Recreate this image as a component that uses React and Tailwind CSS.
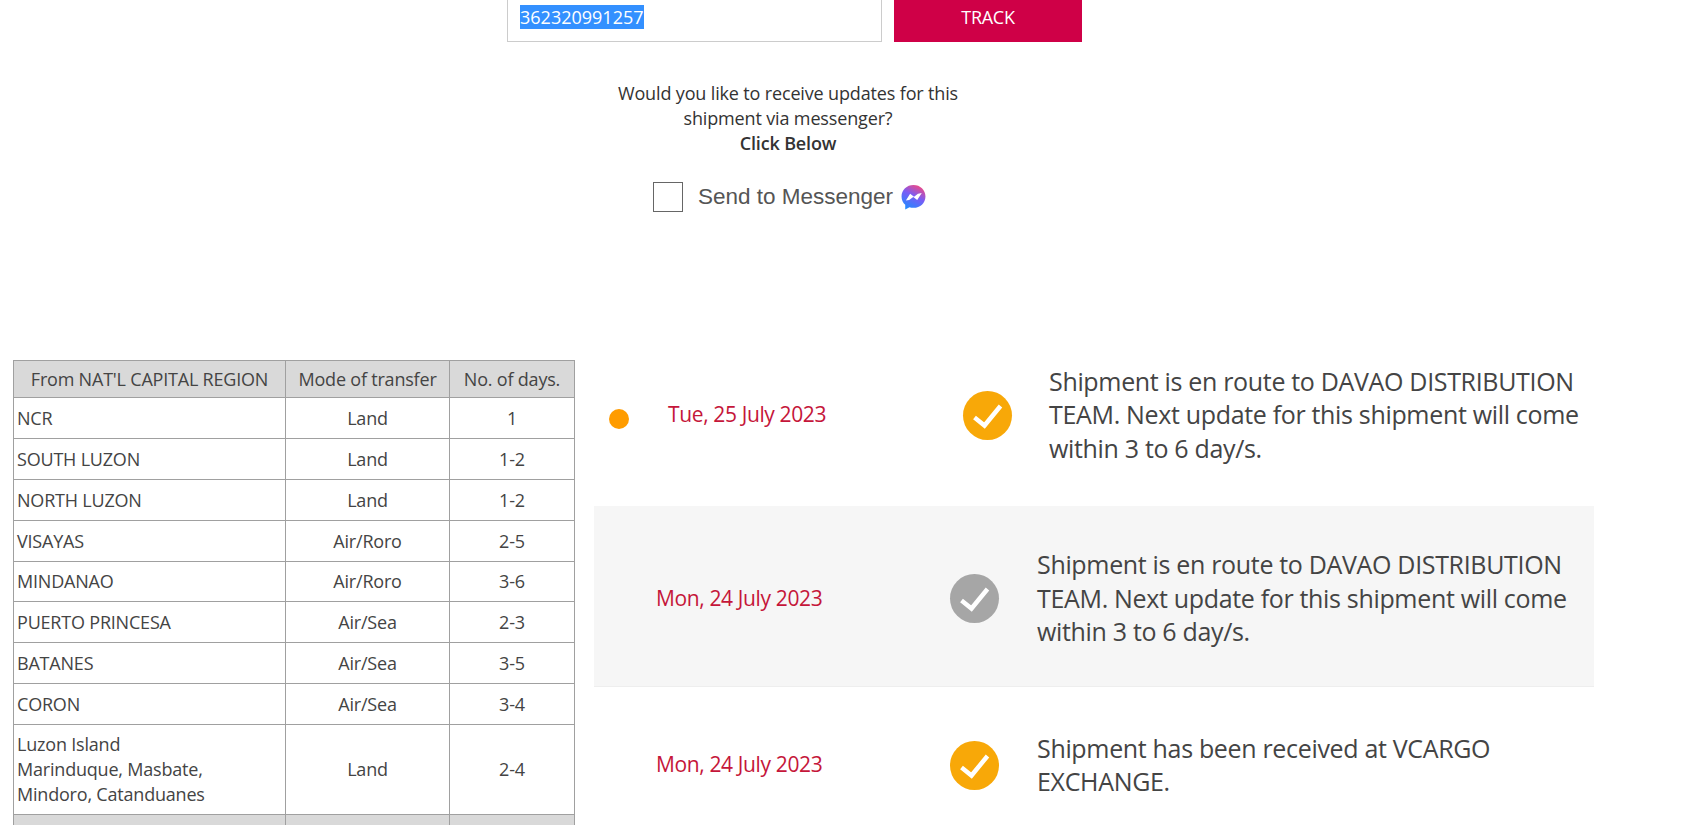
const rows = [
  ['NCR', 'Land', '1', 'h-[41px]'],
  ['SOUTH LUZON', 'Land', '1-2', 'h-[41px]'],
  ['NORTH LUZON', 'Land', '1-2', 'h-[41px]'],
  ['VISAYAS', 'Air/Roro', '2-5', 'h-[41px]'],
  ['MINDANAO', 'Air/Roro', '3-6', 'h-[40px]'],
  ['PUERTO PRINCESA', 'Air/Sea', '2-3', 'h-[41px]'],
  ['BATANES', 'Air/Sea', '3-5', 'h-[41px]'],
  ['CORON', 'Air/Sea', '3-4', 'h-[41px]'],
]

const enRoute = 'Shipment is en route to DAVAO DISTRIBUTION TEAM. Next update for this shipment will come within 3 to 6 day/s.'

function CheckCircle({ gray }) {
  return (
    <div className={`h-[49px] w-[49px] shrink-0 rounded-full flex items-center justify-center ${gray ? 'bg-[#a6a6a6]' : 'bg-[#f8a808]'}`}>
      <svg width="49" height="49" viewBox="0 0 49 49" fill="none">
        <path d="M11.5 26.5 L21.5 34.5 L37.5 15" stroke="#fff" strokeWidth="4.5" />
      </svg>
    </div>
  )
}

function MessengerIcon() {
  return (
    <svg width="25" height="25" viewBox="1 1 22 23" className="shrink-0">
      <defs>
        <linearGradient id="msgr" x1="0.25" y1="1" x2="0.75" y2="0">
          <stop offset="0" stopColor="#1e8bff" />
          <stop offset="0.55" stopColor="#7a5cf5" />
          <stop offset="1" stopColor="#f5487f" />
        </linearGradient>
      </defs>
      <path d="M12 1C5.8 1 1 5.5 1 11.5c0 3.1 1.3 5.8 3.4 7.7v4.3l3.9-2.1c1.2.4 2.4.6 3.7.6 6.2 0 11-4.5 11-10.5S18.2 1 12 1z" fill="url(#msgr)" />
      <path d="M5 15.2l3.9-6.2 3.6 2.7 3.6-2.7h.1l3.4-.6-4.2 6.3-3.6-2.7-3.8 2.8z" fill="#fff" />
    </svg>
  )
}

export default function App() {
  return (
    <div className="h-[825px] overflow-hidden bg-white font-['Open_Sans',sans-serif] text-[#444]">
      <div className="ml-[507px] w-[575px]">
        <div className="flex gap-[12px]">
          <div className="h-[42px] w-[375px] border border-t-0 border-[#ccc] pl-[12px] pt-[5px]">
            <span className="block w-fit bg-[#3390ff] text-[18px] leading-[24px] text-white">362320991257</span>
          </div>
          <button className="h-[42px] w-[188px] bg-[#cf0047] pb-[8px] text-[18px] tracking-[-0.3px] text-white">TRACK</button>
        </div>
        <div className="ml-[81px] mt-[39px] w-[400px] text-center text-[18px] leading-[25px] tracking-[-0.15px] text-[#333]">
          <p>Would you like to receive updates for this<br />shipment via messenger?</p>
          <p className="font-semibold">Click Below</p>
        </div>
        <div className="ml-[146px] mt-[26px] flex h-[30px] items-center">
          <div className="h-[30px] w-[30px] border border-[#666]"></div>
          <span className="ml-[15px] font-['Liberation_Sans',sans-serif] text-[22.5px] text-[#555]">Send to Messenger</span>
          <span className="ml-[8px]"><MessengerIcon /></span>
        </div>
      </div>

      <div className="mt-[112px] flex items-start">
        <table className="ml-[13px] mt-[36px] w-[561px] table-fixed border-collapse text-[18px] leading-[25px] tracking-[-0.2px]">
          <colgroup>
            <col className="w-[272px]" />
            <col className="w-[164px]" />
            <col className="w-[125px]" />
          </colgroup>
          <thead>
            <tr className="h-[37px] bg-[#d9d9d9]">
              <th className="border border-[#a0a0a0] font-normal">From NAT'L CAPITAL REGION</th>
              <th className="border border-[#a0a0a0] font-normal">Mode of transfer</th>
              <th className="border border-[#a0a0a0] font-normal">No. of days.</th>
            </tr>
          </thead>
          <tbody>
            {rows.map(r => (
              <tr key={r[0]} className={r[3]}>
                <td className="border border-[#a0a0a0] pl-[3px]">{r[0]}</td>
                <td className="border border-[#a0a0a0] text-center">{r[1]}</td>
                <td className="border border-[#a0a0a0] text-center">{r[2]}</td>
              </tr>
            ))}
            <tr className="h-[90px]">
              <td className="border border-[#a0a0a0] pl-[3px]">Luzon Island<br />Marinduque, Masbate,<br />Mindoro, Catanduanes</td>
              <td className="border border-[#a0a0a0] text-center">Land</td>
              <td className="border border-[#a0a0a0] text-center">2-4</td>
            </tr>
            <tr className="h-[37px] bg-[#d9d9d9]">
              <td className="border border-[#a0a0a0]"></td>
              <td className="border border-[#a0a0a0]"></td>
              <td className="border border-[#a0a0a0]"></td>
            </tr>
          </tbody>
        </table>

        <div className="ml-[19px] w-[1000px] text-[25px] leading-[33.5px] tracking-[-0.33px]">
          <div className="flex h-[182px] items-center pl-[15px]">
            <span className="mt-[8px] h-[20px] w-[20px] shrink-0 rounded-full bg-[#ff9c00]"></span>
            <span className="ml-[39px] w-[295px] shrink-0 text-[21px] tracking-[-0.37px] text-[#c5163a]">Tue, 25 July 2023</span>
            <CheckCircle />
            <p className="ml-[37px] w-[540px]">{enRoute}</p>
          </div>
          <div className="flex h-[181px] items-center border-b border-[#eee] bg-[#f6f6f6] pl-[62px] pt-[5px]">
            <span className="w-[294px] shrink-0 text-[21px] tracking-[-0.37px] text-[#c5163a]">Mon, 24 July 2023</span>
            <CheckCircle gray />
            <p className="ml-[38px] w-[540px]">{enRoute}</p>
          </div>
          <div className="flex h-[156px] items-center pl-[62px]">
            <span className="w-[294px] shrink-0 text-[21px] tracking-[-0.37px] text-[#c5163a]">Mon, 24 July 2023</span>
            <CheckCircle />
            <p className="ml-[38px] w-[470px]">Shipment has been received at VCARGO EXCHANGE.</p>
          </div>
        </div>
      </div>
    </div>
  )
}
